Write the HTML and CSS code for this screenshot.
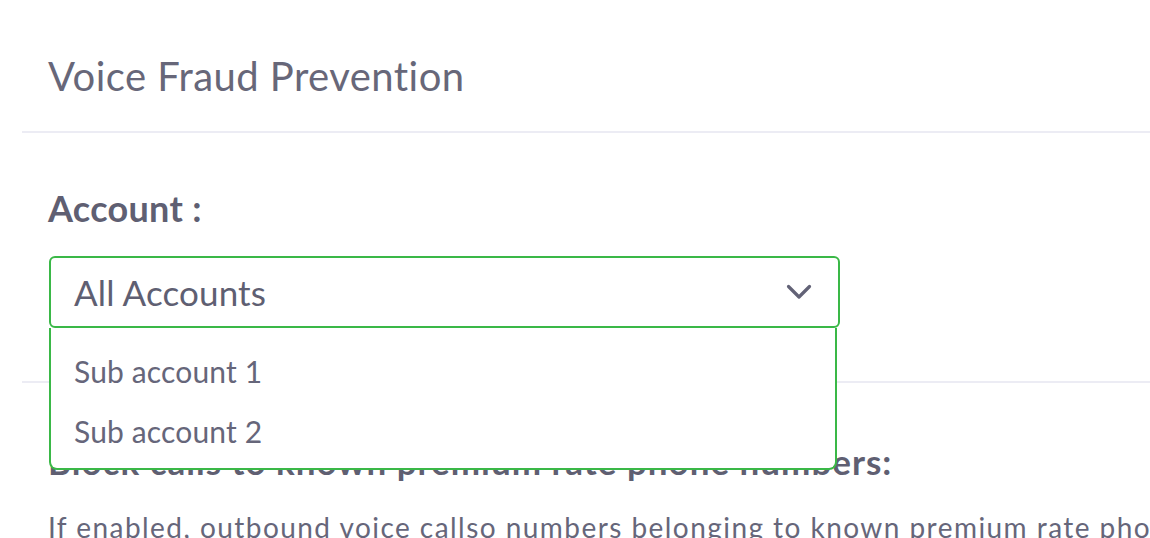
FILE: index.html
```html
<!DOCTYPE html>
<html lang="en">
<head>
<meta charset="utf-8">
<title>Voice Fraud Prevention</title>
<link rel="stylesheet" href="styles.css">
</head>
<body>
<div class="page">
  <header class="header">
    <h1 class="title">Voice Fraud Prevention</h1>
  </header>
  <section class="section account">
    <label class="label">Account :</label>
    <div class="select-wrap">
      <div class="select">
        <span class="select-value">All Accounts</span>
        <svg class="chevron" width="26" height="16" viewBox="0 0 26 16"><path d="M2.5 2.5 L13 13 L23.5 2.5" fill="none" stroke="#626276" stroke-width="3.2" stroke-linecap="round" stroke-linejoin="round"/></svg>
      </div>
      <ul class="menu">
        <li class="menu-item">Sub account 1</li>
        <li class="menu-item">Sub account 2</li>
      </ul>
    </div>
  </section>
  <section class="section block">
    <h2 class="block-title">Block calls to known premium rate phone numbers:</h2>
    <p class="block-text">If enabled, outbound voice callso numbers belonging to known premium rate phone numbers will be blocked.</p>
  </section>
</div>
</body>
</html>
```
FILE: styles.css
```css
html, body {
  margin: 0;
  padding: 0;
  background: #ffffff;
}
body {
  font-family: Lato, "Open Sans", sans-serif;
  color: #646479;
  overflow: hidden;
  width: 1150px;
  height: 538px;
}
.page {
  margin-left: 22px;
  overflow: hidden;
}
.header {
  height: 131px;
  box-sizing: border-box;
  padding: 52px 0 0 26px;
}
.title {
  margin: 0;
  font-weight: 400;
  font-size: 40px;
  line-height: 48px;
  letter-spacing: 0.45px;
  color: #676779;
}
.section {
  border-top: 2px solid #ececf4;
  padding-left: 26px;
}
.account {
  padding-top: 53px;
  height: 250px;
  box-sizing: border-box;
}
.label {
  display: block;
  font-weight: 700;
  font-size: 36px;
  line-height: 44px;
  letter-spacing: 0.3px;
  color: #5f5f72;
}
.select-wrap {
  position: relative;
  width: 791px;
  margin-top: 26px;
  margin-left: 1px;
}
.select {
  height: 72px;
  box-sizing: border-box;
  border: 2px solid #3ab847;
  border-radius: 6px;
  display: flex;
  align-items: center;
  justify-content: space-between;
  padding: 0 26px 0 23px;
  background: #fff;
}
.select-value {
  font-size: 35px;
  line-height: 42px;
  letter-spacing: 0.15px;
  color: #5f5f72;
}
.chevron {
  display: block;
}
.menu {
  position: absolute;
  left: 0;
  top: 72px;
  width: 788px;
  height: 142px;
  box-sizing: border-box;
  margin: 0;
  padding: 13px 0 0 0;
  list-style: none;
  background: #fff;
  border: 2px solid #3ab847;
  border-top: none;
  border-radius: 0 0 8px 8px;
  z-index: 2;
}
.menu-item {
  font-size: 30px;
  line-height: 60px;
  height: 60px;
  padding-left: 23px;
  letter-spacing: 0.15px;
  color: #66667a;
}
.block {
  padding-top: 58px;
}
.block-title {
  margin: 0;
  font-weight: 700;
  font-size: 35px;
  line-height: 40px;
  letter-spacing: 1px;
  color: #5f5f72;
  white-space: nowrap;
}
.block-text {
  margin: 29px 0 0 0;
  font-size: 28px;
  line-height: 34px;
  letter-spacing: 1.45px;
  white-space: nowrap;
  color: #66667a;
}
```
